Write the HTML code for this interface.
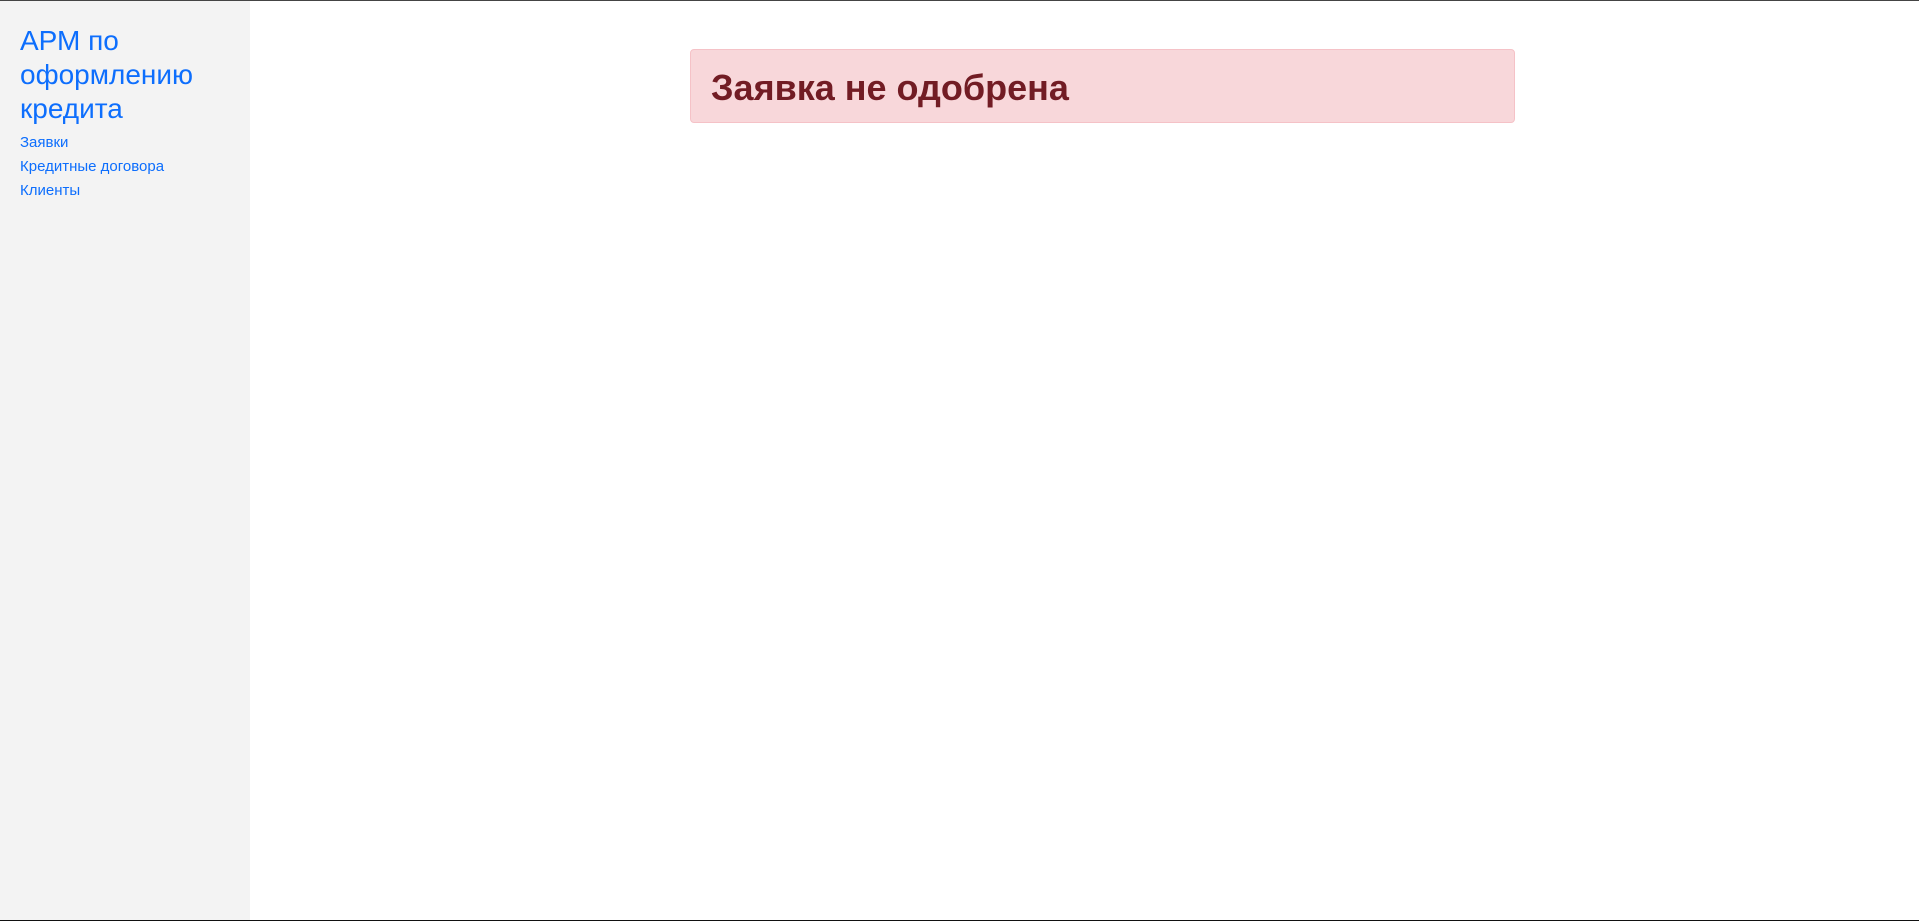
<!DOCTYPE html>
<html><head><meta charset="utf-8"><style>
html,body{margin:0;padding:0;width:1919px;height:921px;overflow:hidden;background:#fff;font-family:"Segoe UI","Liberation Sans","DejaVu Sans",sans-serif;}
.top{position:absolute;left:0;top:0;width:1919px;height:1px;background:#444;}
.bot{position:absolute;left:0;top:920px;width:1919px;height:1px;background:#111;}
.side{position:absolute;left:0;top:1px;width:250px;height:919px;background:#f3f3f3;}
.side h1{margin:0;position:absolute;left:20px;top:23px;font-size:28px;line-height:34px;font-weight:normal;color:#0d6efd;width:220px;}
.side a{position:absolute;left:20px;font-size:15px;color:#0d6efd;text-decoration:none;}
.alert{position:absolute;left:690px;top:49px;width:825px;height:74px;background:#f8d7da;border:1px solid #f5c2c7;border-radius:4px;box-sizing:border-box;}
.alert span{position:absolute;left:20px;top:16px;font-size:36px;line-height:44px;color:#721c24;font-weight:bold;}
</style></head><body>
<div class="top"></div>
<div class="side">
<h1>АРМ по оформлению кредита</h1>
<a style="top:133px">Заявки</a>
<a style="top:157px">Кредитные договора</a>
<a style="top:181px">Клиенты</a>
</div>
<div class="alert"><span>Заявка не одобрена</span></div>
<div class="bot"></div>
</body></html>
